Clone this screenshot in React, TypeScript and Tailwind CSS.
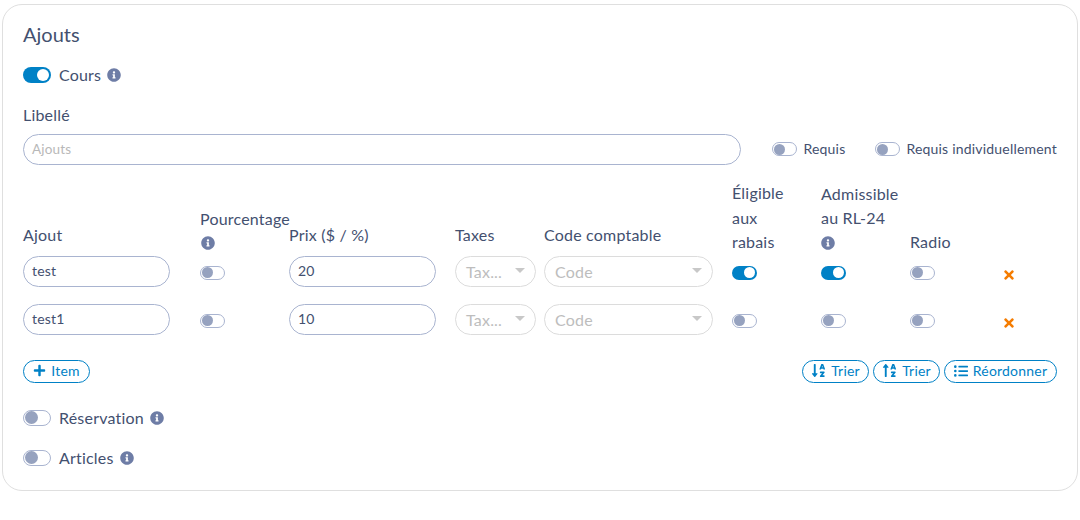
import { FaInfoCircle, FaListUl, FaPlus, FaSortAlphaDown, FaSortAlphaUp, FaTimes } from 'react-icons/fa';

function Toggle({ on = false, large = false }: { on?: boolean; large?: boolean }) {
  const size = large ? 'w-[28px] h-[16px]' : 'w-[25px] h-[14px]';
  if (on) {
    return (
      <span className={`${size} shrink-0 rounded-full bg-[#0081c6] flex items-center justify-end px-[2px]`}>
        <span className={`${large ? 'w-[12px] h-[12px]' : 'w-[11px] h-[11px]'} rounded-full bg-white`} />
      </span>
    );
  }
  return (
    <span className={`${size} shrink-0 rounded-full border border-[#a9b4d0] bg-white flex items-center px-[0.5px]`}>
      <span className={`${large ? 'w-[13px] h-[13px]' : 'w-[11px] h-[11px]'} rounded-full bg-[#96a2bf]`} />
    </span>
  );
}

function Info() {
  return <FaInfoCircle className="text-[#6e7da6] text-[14px] shrink-0" />;
}

function Caret() {
  return (
    <svg width="10" height="5" viewBox="0 0 10 5" className="shrink-0 mb-[2px]">
      <path d="M0 0h10L5 5z" fill="#c8c8c8" />
    </svg>
  );
}

function Pill({ width, children }: { width: string; children: React.ReactNode }) {
  return (
    <span className={`${width} h-[23px] pb-[1px] rounded-full border border-[#0081c6] text-[#0081c6] text-sm flex items-center justify-center gap-[5px]`}>
      {children}
    </span>
  );
}

function TextInput({ value }: { value: string }) {
  return (
    <div className="w-[147px] h-[31px] rounded-full border border-[#a9b4d0] px-[8px] flex items-center text-sm text-[#43506f]">
      {value}
    </div>
  );
}

function Select({ label }: { label: string }) {
  return (
    <div className="h-[31px] pt-[1px] rounded-full border border-[#dcdcdc] px-[10px] flex items-center justify-between text-base text-[#bdbdbd]">
      {label}
      <Caret />
    </div>
  );
}

function SwitchRow({ label, on = false, className }: { label: string; on?: boolean; className: string }) {
  return (
    <div className={`${className} flex items-center h-[24px]`}>
      <Toggle on={on} large />
      <span className="ml-[8px] mr-[6px] text-base">{label}</span>
      <Info />
    </div>
  );
}

function ItemRow({ name, price, rabais = false, rl = false }: { name: string; price: string; rabais?: boolean; rl?: boolean }) {
  return (
    <>
      <TextInput value={name} />
      <div className="flex items-center pt-[3px]"><Toggle /></div>
      <TextInput value={price} />
      <Select label="Tax..." />
      <div className="w-[169px]"><Select label="Code" /></div>
      <div className="flex items-center pt-[3px]"><Toggle on={rabais} /></div>
      <div className="flex items-center pt-[3px]"><Toggle on={rl} /></div>
      <div className="flex items-center pt-[3px]"><Toggle /></div>
      <div className="flex items-center pt-[7px]"><FaTimes className="text-[#f57c00] text-[14px]" /></div>
    </>
  );
}

export default function App() {
  return (
    <div className="w-[1080px] h-[520px] bg-white pt-[4px] px-[2px] font-['Lato',sans-serif] text-[#43506f] tracking-[0.2px]">
      <div className="h-[487px] rounded-[20px] border border-[#dfdfdf] px-[20px] pt-[15px]">
        <h2 className="text-xl leading-[28px] font-normal tracking-normal">Ajouts</h2>

        <SwitchRow className="mt-[15px]" label="Cours" on />

        <div className="mt-[16px] text-base leading-[24px]">Libellé</div>

        <div className="mt-[7px] flex items-center">
          <div className="w-[718px] h-[31px] rounded-full border border-[#a9b4d0] px-[8px] flex items-center text-[13.5px] text-[#b8b8b8]">
            Ajouts
          </div>
          <div className="ml-auto mb-[1px] flex items-center gap-[30px] text-sm">
            <span className="flex items-center gap-[6px]"><Toggle />Requis</span>
            <span className="flex items-center gap-[6px]"><Toggle />Requis individuellement</span>
          </div>
        </div>

        <div className="mt-[16px] grid grid-cols-[169px_81px_158px_81px_180px_81px_81px_84px_1fr] gap-x-[8px] items-end text-base">
          <span className="leading-[24px] pb-[9px]">Ajout</span>
          <div className="leading-[24px] pb-[1px] whitespace-nowrap">
            Pourcentage
            <div className="h-[24px] flex items-center pl-[1px]"><Info /></div>
          </div>
          <span className="leading-[24px] pb-[9px] whitespace-nowrap">Prix ($ / %)</span>
          <span className="leading-[24px] pb-[9px]">Taxes</span>
          <span className="leading-[24px] pb-[9px]">Code comptable</span>
          <span className="leading-[24.5px] pb-[1px]">Éligible<br />aux<br />rabais</span>
          <div className="leading-[24.5px] pb-[1px] whitespace-nowrap">
            Admissible<br />au RL-24
            <div className="h-[24px] flex items-center"><Info /></div>
          </div>
          <span className="leading-[24px] pb-[2px]">Radio</span>
          <span />
        </div>

        <div className="grid grid-cols-[169px_81px_158px_81px_180px_81px_81px_84px_1fr] gap-x-[8px] gap-y-[17px]">
          <ItemRow name="test" price="20" rabais rl />
          <ItemRow name="test1" price="10" />
        </div>

        <div className="mt-[25px] flex items-center justify-between">
          <Pill width="w-[67px]"><FaPlus className="text-[13px]" />Item</Pill>
          <div className="flex items-center gap-[4px]">
            <Pill width="w-[67px]"><FaSortAlphaDown className="text-[15px]" />Trier</Pill>
            <Pill width="w-[67px]"><FaSortAlphaUp className="text-[15px]" />Trier</Pill>
            <Pill width="w-[113px]"><FaListUl className="text-[14px]" />Réordonner</Pill>
          </div>
        </div>

        <SwitchRow className="mt-[23px]" label="Réservation" />
        <SwitchRow className="mt-[16px]" label="Articles" />
      </div>
    </div>
  );
}
